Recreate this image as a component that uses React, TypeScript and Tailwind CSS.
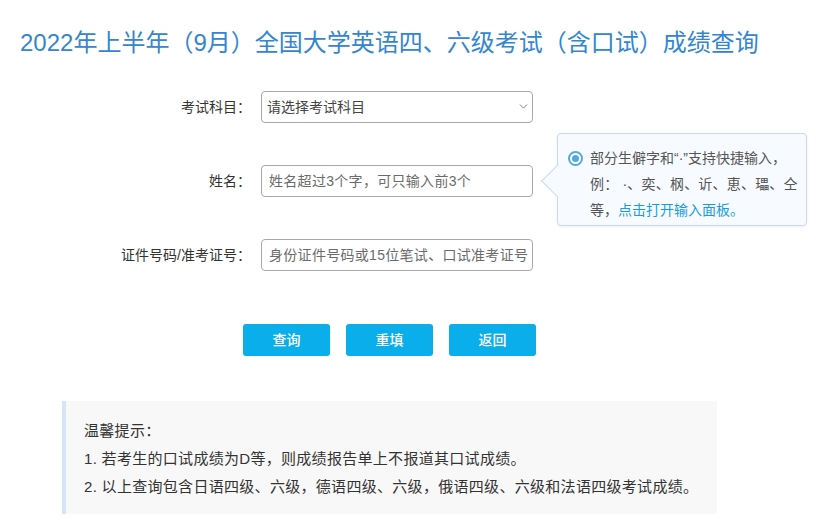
import { ChevronDown } from 'lucide-react'

const font = "font-['Liberation_Sans','Noto_Sans_CJK_SC',sans-serif]"

function Row({ label, children }: { label: string; children: React.ReactNode }) {
  return (
    <div className="flex items-center h-[32px]">
      <label className="w-[251px] text-right text-[14px] text-[#333]">{label}</label>
      <div className="ml-[10px]">{children}</div>
    </div>
  )
}

function TextInput({ placeholder }: { placeholder: string }) {
  return (
    <input
      type="text"
      placeholder={placeholder}
      className={`${font} w-[272px] h-[32px] rounded-[4px] border border-[#a9a9a9] bg-white pl-[7px] pr-[2px] text-[14px] tracking-[0.3px] text-[#333] placeholder:text-[#6b6b6b] outline-none`}
    />
  )
}

export default function App() {
  return (
    <div className={`${font} relative w-[821px] h-[528px] bg-white overflow-hidden`}>
      <h1 className="pt-[26px] pl-[20px] text-[24px] leading-[34px] text-[#3386cf] whitespace-nowrap">
        2022年上半年（9月）全国大学英语四、六级考试（含口试）成绩查询
      </h1>

      <div className="mt-[31px] flex flex-col gap-[42px]">
        <Row label="考试科目：">
          <div className="relative w-[272px] h-[32px]">
            <select
              defaultValue=""
              className={`${font} appearance-none w-full h-full rounded-[4px] border border-[#a9a9a9] bg-white pl-[5px] text-[14px] text-[#444] outline-none`}
            >
              <option value="">请选择考试科目</option>
              <option value="cet4">英语四级</option>
              <option value="cet6">英语六级</option>
            </select>
            <ChevronDown className="pointer-events-none absolute right-[3px] top-[9px] w-[13px] h-[13px] text-[#666]" strokeWidth={1.5} />
          </div>
        </Row>
        <Row label="姓名：">
          <TextInput placeholder="姓名超过3个字，可只输入前3个" />
        </Row>
        <Row label="证件号码/准考证号：">
          <TextInput placeholder="身份证件号码或15位笔试、口试准考证号" />
        </Row>
      </div>

      <div className="mt-[53px] ml-[243px] flex gap-[16px]">
        {['查询', '重填', '返回'].map(t => (
          <button
            key={t}
            className="w-[87px] h-[32px] rounded-[3px] bg-[#0aaeea] text-white text-[14px] font-medium"
          >
            {t}
          </button>
        ))}
      </div>

      <div className="mt-[45px] ml-[62px] w-[655px] h-[113px] border-l-4 border-[#d5e5f5] bg-[#f8f8f8] pl-[18px] pt-[16px] text-[15px] tracking-[0.3px] leading-[28px] text-[#333]">
        <p>温馨提示：</p>
        <p>1. 若考生的口试成绩为D等，则成绩报告单上不报道其口试成绩。</p>
        <p>2. 以上查询包含日语四级、六级，德语四级、六级，俄语四级、六级和法语四级考试成绩。</p>
      </div>

      {/* input tip popover */}
      <div className="absolute left-[557px] top-[133px] w-[250px] h-[93px] rounded-[4px] border border-[#c6dbf1] bg-[#f7fbff] shadow-[0_1px_3px_rgba(0,0,0,0.06)]">
        <div className="absolute left-[-12px] top-[35px] w-[24px] h-[24px] rotate-45 border-l border-b border-[#c6dbf1] bg-[#f7fbff]" />
        <div className="relative pl-[32px] pt-[11px] text-[14px] leading-[26px] text-[#555] whitespace-nowrap">
          <span className="absolute left-[10px] top-[17px] flex w-[15px] h-[15px] items-center justify-center rounded-full border-2 border-[#55a9dc] bg-white">
            <span className="w-[7px] h-[7px] rounded-full bg-[#55a9dc]" />
          </span>
          <div>部分生僻字和“·”支持快捷输入，</div>
          <div className="tracking-[0.2px]">例：&nbsp;·、奕、㭎、䜣、恵、瓃、仝</div>
          <div>
            等，<span className="text-[#1a9be0]">点击打开输入面板。</span>
          </div>
        </div>
      </div>
    </div>
  )
}
